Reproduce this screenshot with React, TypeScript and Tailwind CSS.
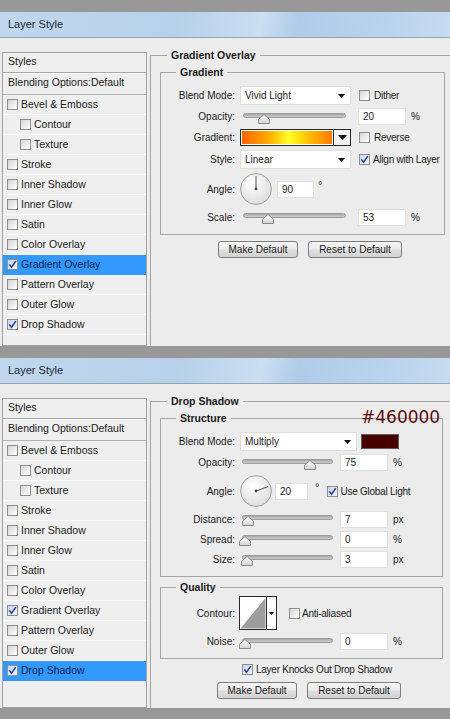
import React from 'react';

type StyleItem = { label: string; checked?: boolean; indent?: boolean };

const styleItems: StyleItem[] = [
  { label: 'Bevel & Emboss' },
  { label: 'Contour', indent: true },
  { label: 'Texture', indent: true },
  { label: 'Stroke' },
  { label: 'Inner Shadow' },
  { label: 'Inner Glow' },
  { label: 'Satin' },
  { label: 'Color Overlay' },
  { label: 'Gradient Overlay', checked: true },
  { label: 'Pattern Overlay' },
  { label: 'Outer Glow' },
  { label: 'Drop Shadow', checked: true },
];

const Check = ({ checked = false, className = '' }: { checked?: boolean; className?: string }) => (
  <span
    className={`flex h-[11px] w-[11px] shrink-0 items-center justify-center border border-[#8e8f8f] ${
      checked
        ? 'bg-[linear-gradient(135deg,#c9d6ea,#eef3fb)]'
        : 'bg-[linear-gradient(135deg,#d4d4d4,#f4f4f4_70%,#ffffff)]'
    } ${className}`}
  >
    {checked && (
      <svg width="9" height="9" viewBox="0 0 9 9">
        <path d="M1.3 4.4 L3.5 7.3 L7.8 1.1" fill="none" stroke="#2a3d8f" strokeWidth="1.5" />
      </svg>
    )}
  </span>
);

const Arrow = ({ big = false }: { big?: boolean }) =>
  big ? (
    <svg width="9" height="5" viewBox="0 0 9 5">
      <path d="M0 0H9L4.5 5Z" fill="#111" />
    </svg>
  ) : (
    <svg width="7" height="4" viewBox="0 0 7 4">
      <path d="M0 0H7L3.5 4Z" fill="#111" />
    </svg>
  );

const Select = ({ value, width }: { value: string; width: string }) => (
  <div
    className={`flex h-[19px] shrink-0 items-center justify-between border border-[#dcdcdc] bg-white pl-[4px] pr-[5px] ${width}`}
  >
    <span>{value}</span>
    <Arrow />
  </div>
);

const Field = ({ value, width, className = '' }: { value: string; width: string; className?: string }) => (
  <div
    className={`flex h-[17px] shrink-0 items-center border border-[#e0e0e0] bg-white pl-[4px] ${width} ${className}`}
  >
    {value}
  </div>
);

const Thumb = () => (
  <svg width="12" height="10" viewBox="0 0 12 10">
    <defs>
      <linearGradient id="thumbFill" x1="0" y1="0" x2="0" y2="1">
        <stop offset="0" stopColor="#ffffff" />
        <stop offset="1" stopColor="#d2d2d2" />
      </linearGradient>
    </defs>
    <path d="M6 0.5 L11.5 5.3 V9.5 H0.5 V5.3 Z" fill="url(#thumbFill)" stroke="#8a8a8a" />
  </svg>
);

const Slider = ({ width, track, at }: { width: string; track: string; at: number }) => (
  <div className={`relative h-[16px] shrink-0 ${width}`}>
    <div
      className={`absolute top-[4px] h-[5px] rounded-full border border-[#9b9b9b] bg-[linear-gradient(#a8a8a8,#cdcdcd)] ${track}`}
    />
    <div className="absolute top-[5px] flex" style={{ left: at - 6 }}>
      <Thumb />
    </div>
  </div>
);

const Dial = ({ angle }: { angle: number }) => {
  const r = (angle * Math.PI) / 180;
  const x = 16 + 13 * Math.cos(r);
  const y = 16 - 13 * Math.sin(r);
  return (
    <svg width="32" height="32" viewBox="0 0 32 32" className="shrink-0">
      <defs>
        <radialGradient id={`dial${angle}`} cx="0.4" cy="0.35" r="0.75">
          <stop offset="0" stopColor="#ffffff" />
          <stop offset="1" stopColor="#d9d9d9" />
        </radialGradient>
      </defs>
      <circle cx="16" cy="16" r="15.4" fill={`url(#dial${angle})`} stroke="#a0a0a0" />
      <line x1="16" y1="16" x2={x} y2={y} stroke="#555" strokeWidth="1" />
      <circle cx="16" cy="16" r="1.4" fill="#444" />
    </svg>
  );
};

const GradientSwatch = () => (
  <div className="flex h-[17px] w-[111px] shrink-0 border border-[#262626] bg-white">
    <div className="m-px flex-1 bg-[linear-gradient(90deg,#ff6400,#ffa800_28%,#ffff24_52%,#ffc000_74%,#ff7800)]" />
    <div className="flex w-[17px] items-center justify-center border-l border-[#262626] bg-[#f3f3f3]">
      <Arrow big />
    </div>
  </div>
);

const ContourPicker = () => (
  <div className="-ml-px flex h-[34px] w-[38px] shrink-0 border border-[#2a2a2a] bg-white">
    <svg width="26" height="32" viewBox="0 0 26 32">
      <rect width="26" height="32" fill="#ffffff" />
      <path d="M0.5 31.5 L25.5 1 L25.5 31.5 Z" fill="#9d9d9d" />
    </svg>
    <div className="flex flex-1 items-center justify-center border-l border-[#2a2a2a]">
      <svg width="5" height="3" viewBox="0 0 5 3">
        <path d="M0 0H5L2.5 3Z" fill="#111" />
      </svg>
    </div>
  </div>
);

const Btn = ({ width, children }: { width: string; children: React.ReactNode }) => (
  <div
    className={`flex h-[17px] items-center justify-center rounded-[3px] border border-[#7c7c7c] bg-[linear-gradient(#f5f5f5,#ebebeb_48%,#dedede_52%,#d2d2d2)] ${width}`}
  >
    {children}
  </div>
);

const Row = ({ h, label, children }: { h: string; label: string; children: React.ReactNode }) => (
  <div className={`flex items-center ${h}`}>
    <span className="w-[74px] shrink-0 text-right">{label}</span>
    <div className="ml-[5px] flex items-center">{children}</div>
  </div>
);

// label text beside a checkbox, set a little tighter so it fits the box
const Opt = ({ children, className = '' }: { children: React.ReactNode; className?: string }) => (
  <span className={`whitespace-nowrap tracking-[-0.25px] ${className}`}>{children}</span>
);

const Degree = ({ className = '' }: { className?: string }) => (
  <span className={`mb-[9px] text-[11px] leading-[12px] ${className}`}>°</span>
);

const StylesPanel = ({ active }: { active: string }) => (
  <div className="ml-[2px] mt-[14px] flex w-[145px] shrink-0 flex-col border border-[#a2a2a2] bg-[#efefef] text-[10.5px]">
    <div className="flex h-[19px] shrink-0 items-center pb-[2px] pl-[5px]">Styles</div>
    <div className="h-[2px] shrink-0 border-t border-[#a9a9a9] bg-[#fdfdfd]" />
    <div className="flex h-[21px] shrink-0 items-center border-b border-[#b3b3b3] pb-[3px] pl-[5px]">
      Blending Options:Default
    </div>
    {styleItems.map((it) => {
      const on = it.label === active;
      return (
        <div
          key={it.label}
          className={`flex h-[20px] shrink-0 items-center gap-[3px] border-b ${
            on ? 'border-[#3399ff] bg-[#3399ff] text-[#10225a]' : 'border-[#fbfbfb]'
          } ${it.indent ? 'pl-[17px]' : 'pl-[4px]'}`}
        >
          <Check checked={it.checked} />
          <span>{it.label}</span>
        </div>
      );
    })}
  </div>
);

const Dialog = ({ body, active, children }: { body: string; active: string; children: React.ReactNode }) => (
  <div className="flex shrink-0 flex-col">
    <div className="flex h-[26px] items-center border-b border-[#97a3ae] bg-[linear-gradient(100deg,#c0d7ee_0%,#b7d1ea_40%,#cbdef2_58%,#b0cce8_66%,#b9d3ed_85%,#c6dbf0_100%)] pl-[8px] text-[11px] text-[#1c2733]">
      Layer Style
    </div>
    <div className={`flex overflow-hidden bg-[#ececec] ${body}`}>
      <StylesPanel active={active} />
      <div className="relative ml-[3px] flex flex-1 flex-col pt-[10px] text-[10px]">{children}</div>
    </div>
  </div>
);

const legend = 'px-[4px] text-[10.5px] font-bold leading-[14px]';

const GradientOverlay = () => (
  <fieldset className="flex-1 border-l border-t border-[#a6a6a6]">
    <legend className={`ml-[16px] ${legend}`}>Gradient Overlay</legend>
    <fieldset className="ml-[9px] mt-[3px] w-[285px] border border-[#a6a6a6] pb-[7px] pt-[6px]">
      <legend className={`ml-[15px] ${legend}`}>Gradient</legend>
      <Row h="h-[21px]" label="Blend Mode:">
        <Select value="Vivid Light" width="w-[111px]" />
        <Check className="ml-[8px]" />
        <Opt className="ml-[4px]">Dither</Opt>
      </Row>
      <Row h="h-[21px]" label="Opacity:">
        <Slider width="w-[111px]" track="left-[3px] right-[5px]" at={24} />
        <Field value="20" width="w-[48px]" className="ml-[7px]" />
        <span className="ml-[5px]">%</span>
      </Row>
      <Row h="h-[21px]" label="Gradient:">
        <GradientSwatch />
        <Check className="ml-[8px]" />
        <Opt className="ml-[4px]">Reverse</Opt>
      </Row>
      <Row h="h-[23px]" label="Style:">
        <Select value="Linear" width="w-[111px]" />
        <Check checked className="ml-[8px]" />
        <Opt className="ml-[3px]">Align with Layer</Opt>
      </Row>
      <Row h="h-[36px]" label="Angle:">
        <Dial angle={90} />
        <Field value="90" width="w-[37px]" className="ml-[5px]" />
        <Degree className="ml-[4px]" />
      </Row>
      <Row h="h-[20px]" label="Scale:">
        <Slider width="w-[111px]" track="left-[3px] right-[5px]" at={28} />
        <Field value="53" width="w-[48px]" className="ml-[7px]" />
        <span className="ml-[5px]">%</span>
      </Row>
    </fieldset>
    <div className="ml-[67px] mt-[6px] flex gap-[10px]">
      <Btn width="w-[80px]">Make Default</Btn>
      <Btn width="w-[94px]">Reset to Default</Btn>
    </div>
  </fieldset>
);

const DropShadow = () => (
  <>
    <fieldset className="flex-1 border-l border-t border-[#a6a6a6]">
      <legend className={`ml-[16px] ${legend}`}>Drop Shadow</legend>
      <fieldset className="ml-[9px] mt-[3px] w-[283px] border border-[#a6a6a6] pb-[7px] pt-[6px]">
        <legend className={`ml-[15px] ${legend}`}>Structure</legend>
        <Row h="h-[21px]" label="Blend Mode:">
          <Select value="Multiply" width="w-[117px]" />
          <div className="ml-[4px] h-[15px] w-[38px] border border-[#5e5e5e] bg-[#460000]" />
        </Row>
        <Row h="h-[21px]" label="Opacity:">
          <Slider width="w-[95px]" track="left-[2px] right-[2px]" at={70} />
          <Field value="75" width="w-[48px]" className="ml-[5px]" />
          <span className="ml-[5px]">%</span>
        </Row>
        <Row h="h-[36px]" label="Angle:">
          <Dial angle={20} />
          <Field value="20" width="w-[33px]" className="ml-[3px]" />
          <Degree className="ml-[7px]" />
          <Check checked className="ml-[8px]" />
          <Opt className="ml-[2px]">Use Global Light</Opt>
        </Row>
        <Row h="h-[20px]" label="Distance:">
          <Slider width="w-[95px]" track="left-[2px] right-[2px]" at={8} />
          <Field value="7" width="w-[48px]" className="ml-[5px]" />
          <span className="ml-[5px]">px</span>
        </Row>
        <Row h="h-[20px]" label="Spread:">
          <Slider width="w-[95px]" track="left-[2px] right-[2px]" at={5} />
          <Field value="0" width="w-[48px]" className="ml-[5px]" />
          <span className="ml-[5px]">%</span>
        </Row>
        <Row h="h-[20px]" label="Size:">
          <Slider width="w-[95px]" track="left-[2px] right-[2px]" at={7} />
          <Field value="3" width="w-[48px]" className="ml-[5px]" />
          <span className="ml-[5px]">px</span>
        </Row>
      </fieldset>
      <fieldset className="ml-[9px] mt-[3px] w-[283px] border border-[#a6a6a6] pb-[6px] pt-[1px]">
        <legend className={`ml-[15px] ${legend}`}>Quality</legend>
        <Row h="h-[36px]" label="Contour:">
          <ContourPicker />
          <Check className="ml-[12px]" />
          <Opt className="ml-[2px]">Anti-aliased</Opt>
        </Row>
        <Row h="h-[21px]" label="Noise:">
          <Slider width="w-[95px]" track="left-[2px] right-[2px]" at={5} />
          <Field value="0" width="w-[48px]" className="ml-[5px]" />
          <span className="ml-[5px]">%</span>
        </Row>
      </fieldset>
      <div className="ml-[91px] mt-[2px] flex h-[16px] items-center">
        <Check checked />
        <Opt className="ml-[3px]">Layer Knocks Out Drop Shadow</Opt>
      </div>
      <div className="ml-[66px] mt-[5px] flex gap-[10px]">
        <Btn width="w-[80px]">Make Default</Btn>
        <Btn width="w-[94px]">Reset to Default</Btn>
      </div>
    </fieldset>
    <div className="absolute left-[211px] top-[25px] font-['DejaVu_Sans',sans-serif] text-[17px] leading-[17px] text-[#5a0d0d]">
      #460000
    </div>
  </>
);

export default function App() {
  return (
    <div className="flex h-[719px] w-[450px] flex-col overflow-hidden bg-[#989898] font-['Liberation_Sans',Arial,sans-serif] text-[#1b1b1b]">
      <div className="h-[12px] shrink-0" />
      <Dialog body="h-[308px]" active="Gradient Overlay">
        <GradientOverlay />
      </Dialog>
      <div className="h-[12px] shrink-0" />
      <Dialog body="h-[324px]" active="Drop Shadow">
        <DropShadow />
      </Dialog>
    </div>
  );
}
